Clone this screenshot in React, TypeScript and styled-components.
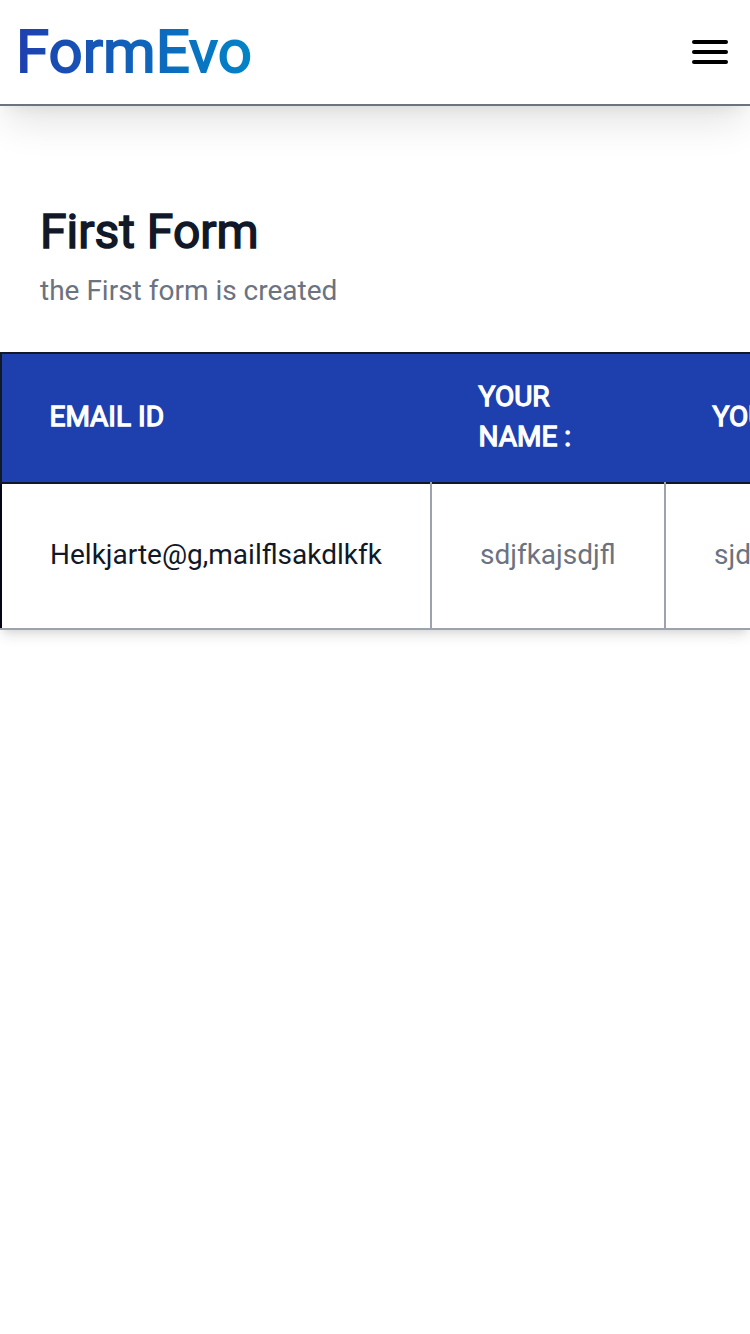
import React from "react";
import styled, { createGlobalStyle } from "styled-components";

const GlobalStyle = createGlobalStyle`
  *, *::before, *::after { box-sizing: border-box; }
  html, body { margin: 0; background: #fff; overflow-x: hidden; }
  body { font-family: Roboto, "Liberation Sans", sans-serif; color: #111827; }
`;

const Page = styled.div`
  min-height: 1334px;
  background: #fff;
  overflow: hidden;
`;

const Header = styled.header`
  display: flex;
  align-items: center;
  justify-content: space-between;
  height: 106px;
  padding: 0 16px;
  background: #fff;
  border-bottom: 2px solid #6b7280;
  box-shadow: 0 20px 40px -6px rgba(0, 0, 0, 0.12), 0 8px 14px -8px rgba(0, 0, 0, 0.08);
`;

const Logo = styled.div`
  font-size: 60px;
  line-height: 72px;
  color: transparent;
  background: linear-gradient(to right, #1e40af, #0284c7);
  -webkit-background-clip: text;
  background-clip: text;
  -webkit-text-stroke: 1.8px transparent;
`;

const MenuButton = styled.button`
  display: flex;
  flex-direction: column;
  justify-content: center;
  gap: 6px;
  width: 48px;
  height: 48px;
  padding: 0 6px;
  border: 0;
  background: transparent;
`;

const MenuBar = styled.span`
  height: 4px;
  border-radius: 2px;
  background: #000;
`;

const Intro = styled.section`
  height: 246px;
  padding: 98px 40px 0;
`;

const Title = styled.h1`
  margin: 0;
  font-size: 48px;
  font-weight: 400;
  line-height: 56px;
  -webkit-text-stroke: 1.5px currentColor;
`;

const Description = styled.p`
  margin: 11px 0 0;
  font-size: 28px;
  line-height: 40px;
  color: #6b7280;
`;

const TableFrame = styled.div`
  overflow: hidden;
  height: 278px;
  box-shadow: 0 8px 12px -2px rgba(0, 0, 0, 0.1), 0 4px 8px -4px rgba(0, 0, 0, 0.1);
`;

const Table = styled.table`
  width: 898px;
  table-layout: fixed;
  border-collapse: collapse;
  font-size: 28px;
  line-height: 40px;
  text-align: left;
`;

const Column = styled.col<{ $width: number }>`
  width: ${(p) => p.$width}px;
`;

const HeadRow = styled.tr`
  height: 130px;
  color: #fff;
  background: #1e40af;
  border: 2px solid #111827;
`;

const HeadCell = styled.th`
  padding: 23px 47px 25px 47.5px;
  font-weight: 400;
  -webkit-text-stroke: 1.3px currentColor;

  &:last-child {
    white-space: nowrap;
  }
`;

const BodyRow = styled.tr`
  height: 146px;
  background: #fff;
  border-left: 2px solid #020617;
  border-bottom: 2px solid #9ca3af;
`;

const BodyCell = styled.td<{ $primary?: boolean }>`
  padding: 0 48px 2px;
  color: ${(p) => (p.$primary ? "#111827" : "#6b7280")};
  border-right: 2px solid #9ca3af;
`;

const columns = [
  { label: "EMAIL ID", value: "Helkjarte@g,mailflsakdlkfk", width: 430 },
  { label: "YOUR NAME :", value: "sdjfkajsdjfl", width: 234 },
  { label: "YOUR AGE :", value: "sjdfkl", width: 234 },
];

export default function App() {
  return (
    <Page>
      <GlobalStyle />
      <Header>
        <Logo>FormEvo</Logo>
        <MenuButton aria-label="Open menu">
          <MenuBar />
          <MenuBar />
          <MenuBar />
        </MenuButton>
      </Header>
      <Intro>
        <Title>First Form</Title>
        <Description>the First form is created</Description>
      </Intro>
      <TableFrame>
        <Table>
          <colgroup>
            {columns.map((c) => (
              <Column key={c.label} $width={c.width} />
            ))}
          </colgroup>
          <thead>
            <HeadRow>
              {columns.map((c) => (
                <HeadCell key={c.label}>{c.label}</HeadCell>
              ))}
            </HeadRow>
          </thead>
          <tbody>
            <BodyRow>
              {columns.map((c, i) => (
                <BodyCell key={c.label} $primary={i === 0}>
                  {c.value}
                </BodyCell>
              ))}
            </BodyRow>
          </tbody>
        </Table>
      </TableFrame>
    </Page>
  );
}
